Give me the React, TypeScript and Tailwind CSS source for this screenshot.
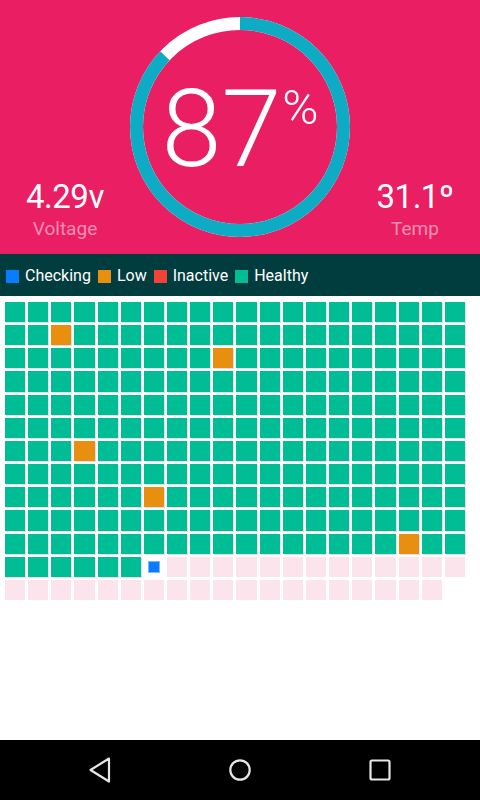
type CellStatus = 'healthy' | 'low' | 'checking' | 'inactive'

const lowCells = new Set(['1-2', '2-9', '6-3', '8-6', '10-17'])
const checkingIndex = 226
const totalCells = 259

const cells: CellStatus[] = Array.from({ length: totalCells }, (_, index) => {
  const row = Math.floor(index / 20)
  const col = index % 20
  if (index === checkingIndex) return 'checking'
  if (index > checkingIndex) return 'inactive'
  if (lowCells.has(`${row}-${col}`)) return 'low'
  return 'healthy'
})

const legend = [
  { label: 'Checking', className: 'bg-[#0a7cff]' },
  { label: 'Low', className: 'bg-[#e98f10]' },
  { label: 'Inactive', className: 'bg-[#f34236]' },
  { label: 'Healthy', className: 'bg-[#00bd96]' },
]

const radius = 103.5
const circumference = 2 * Math.PI * radius
const charge = 87

function ChargeRing() {
  return (
    <div className="relative size-[220px] shrink-0">
      <svg className="size-full -rotate-90" viewBox="0 0 220 220">
        <circle cx="110" cy="110" r={radius} fill="none" stroke="#ffffff" strokeWidth="13" />
        <circle
          cx="110"
          cy="110"
          r={radius}
          fill="none"
          stroke="#0eacc4"
          strokeWidth="13"
          strokeDasharray={`${(circumference * charge) / 100} ${circumference}`}
        />
      </svg>
      <div className="absolute inset-0 flex items-center justify-center pt-[4px]">
        <div className="flex items-start text-white font-light">
          <span className="text-[108px] leading-none">{charge}</span>
          <span className="mt-[8px] ml-[1px] text-[49px] leading-none">%</span>
        </div>
      </div>
    </div>
  )
}

function Stat({ value, label }: { value: string; label: string }) {
  return (
    <div className="flex w-[131px] flex-col items-center justify-end pb-[16px]">
      <span className="text-[33px] leading-none tracking-[-0.5px] text-white">{value}</span>
      <span className="mt-[6px] text-[19px] leading-none text-white/50">{label}</span>
    </div>
  )
}

function Cell({ status }: { status: CellStatus }) {
  if (status === 'checking') {
    return (
      <div className="flex aspect-square items-center justify-center bg-white">
        <div className="size-[10px] bg-[#0a7cff] ring-1 ring-[#7fb6ff]" />
      </div>
    )
  }
  const tone = {
    healthy: 'bg-[#00bd96] shadow-[1px_1px_0_rgba(0,0,0,0.12)]',
    low: 'bg-[#e98f10] shadow-[1px_1px_0_rgba(0,0,0,0.12)]',
    inactive: 'bg-[#fce4ec]',
  }[status]
  return <div className={`aspect-square ${tone}`} />
}

export default function App() {
  return (
    <div className="flex h-[800px] w-[480px] flex-col bg-white font-['Roboto',sans-serif]">
      <header className="flex h-[254px] bg-[#e91e63]">
        <Stat value="4.29v" label="Voltage" />
        <div className="flex flex-1 justify-center pt-[17px]">
          <ChargeRing />
        </div>
        <Stat value="31.1º" label="Temp" />
      </header>

      <div className="flex h-[42px] items-center gap-[7px] bg-[#013d3e] pt-[2px] pl-[6px]">
        {legend.map((item) => (
          <div key={item.label} className="flex items-center gap-[6px]">
            <span className={`size-[13px] ${item.className}`} />
            <span className="text-[16px] leading-none text-white">{item.label}</span>
          </div>
        ))}
      </div>

      <main className="flex-1 px-[5px] pt-[6px]">
        <div className="grid w-[460px] grid-cols-[repeat(20,minmax(0,1fr))] gap-[3px]">
          {cells.map((status, index) => (
            <Cell key={index} status={status} />
          ))}
        </div>
      </main>

      <nav className="flex h-[60px] items-center justify-center gap-[100px] bg-black">
        <svg className="size-10" viewBox="0 0 40 40" fill="none" stroke="#e6e6e6" strokeWidth="2.2" strokeLinejoin="round">
          <path d="M29 8.5 L10.5 20 L29 31.5 Z" />
        </svg>
        <svg className="size-10" viewBox="0 0 40 40" fill="none" stroke="#e6e6e6" strokeWidth="2.2">
          <circle cx="20" cy="20" r="9.7" />
        </svg>
        <svg className="size-10" viewBox="0 0 40 40" fill="none" stroke="#e6e6e6" strokeWidth="2.2">
          <rect x="10.5" y="10.5" width="19" height="19" rx="1.5" />
        </svg>
      </nav>
    </div>
  )
}
